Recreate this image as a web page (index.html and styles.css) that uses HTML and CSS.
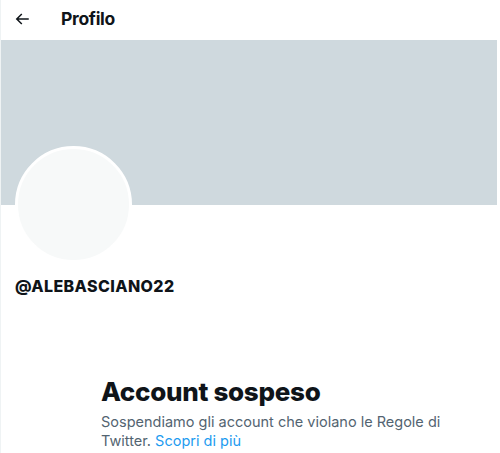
FILE: index.html
```html
<!DOCTYPE html>
<html lang="it">
<head>
    <meta charset="UTF-8">
    <meta name="viewport" content="width=device-width, initial-scale=1.0">
    <title>Profilo</title>
    <link rel="stylesheet" href="styles.css">
</head>
<body>

<div class="page">
    <header class="topbar">
        <a class="back" href="#" aria-label="Indietro">
            <svg viewBox="0 0 24 24" width="18" height="18">
                <path d="M7.414 13l5.043 5.04-1.414 1.42L3.586 12l7.457-7.46 1.414 1.42L7.414 11H21v2H7.414z"></path>
            </svg>
        </a>
        <h2 class="title">Profilo</h2>
    </header>

    <div class="banner"></div>

    <div class="profile">
        <div class="avatar"></div>
        <div class="handle">@ALEBASCIANO22</div>
    </div>

    <div class="suspended">
        <h1>Account sospeso</h1>
        <p>Sospendiamo gli account che violano le Regole di Twitter. <a href="#">Scopri di più</a></p>
    </div>
</div>

</body>
</html>
```

FILE: styles.css
```css
body {
    margin: 0;
    padding: 0;
    background: #fff;
    font-family: Inter, "Noto Sans", Arial, sans-serif;
    color: #0f1419;
}
.page {
    width: 500px;
    height: 453px;
    overflow: hidden;
    border-left: 1px solid #eff3f4;
    box-sizing: border-box;
}
.topbar {
    height: 40px;
    display: flex;
    align-items: center;
    padding: 0 0 0 12px;
}
.back {
    display: flex;
    width: 18px;
    height: 18px;
    margin-top: -3px;
}
.back svg {
    fill: #0f1419;
}
.title {
    margin: -3px 0 0 30px;
    font-size: 17.5px;
    font-weight: 700;
    letter-spacing: -0.3px;
}
.banner {
    height: 165px;
    background: #cfd9de;
    margin-right: 3px;
}
.profile {
    padding: 0 14px;
}
.avatar {
    width: 111px;
    height: 111px;
    border-radius: 50%;
    background: #f7f9f9;
    border: 3px solid #fff;
    margin-top: -59px;
}
.handle {
    margin-top: 13px;
    font-size: 16px;
    font-weight: 800;
    letter-spacing: 0.4px;
}
.suspended {
    margin: 78px 0 0 100px;
    width: 345px;
}
.suspended h1 {
    margin: 0;
    font-size: 26px;
    font-weight: 800;
    letter-spacing: -0.3px;
    line-height: 36px;
}
.suspended p {
    margin: 2px 0 0;
    font-size: 14.5px;
    line-height: 19px;
    color: #536471;
}
.suspended a {
    color: #1d9bf0;
    text-decoration: none;
}
```
